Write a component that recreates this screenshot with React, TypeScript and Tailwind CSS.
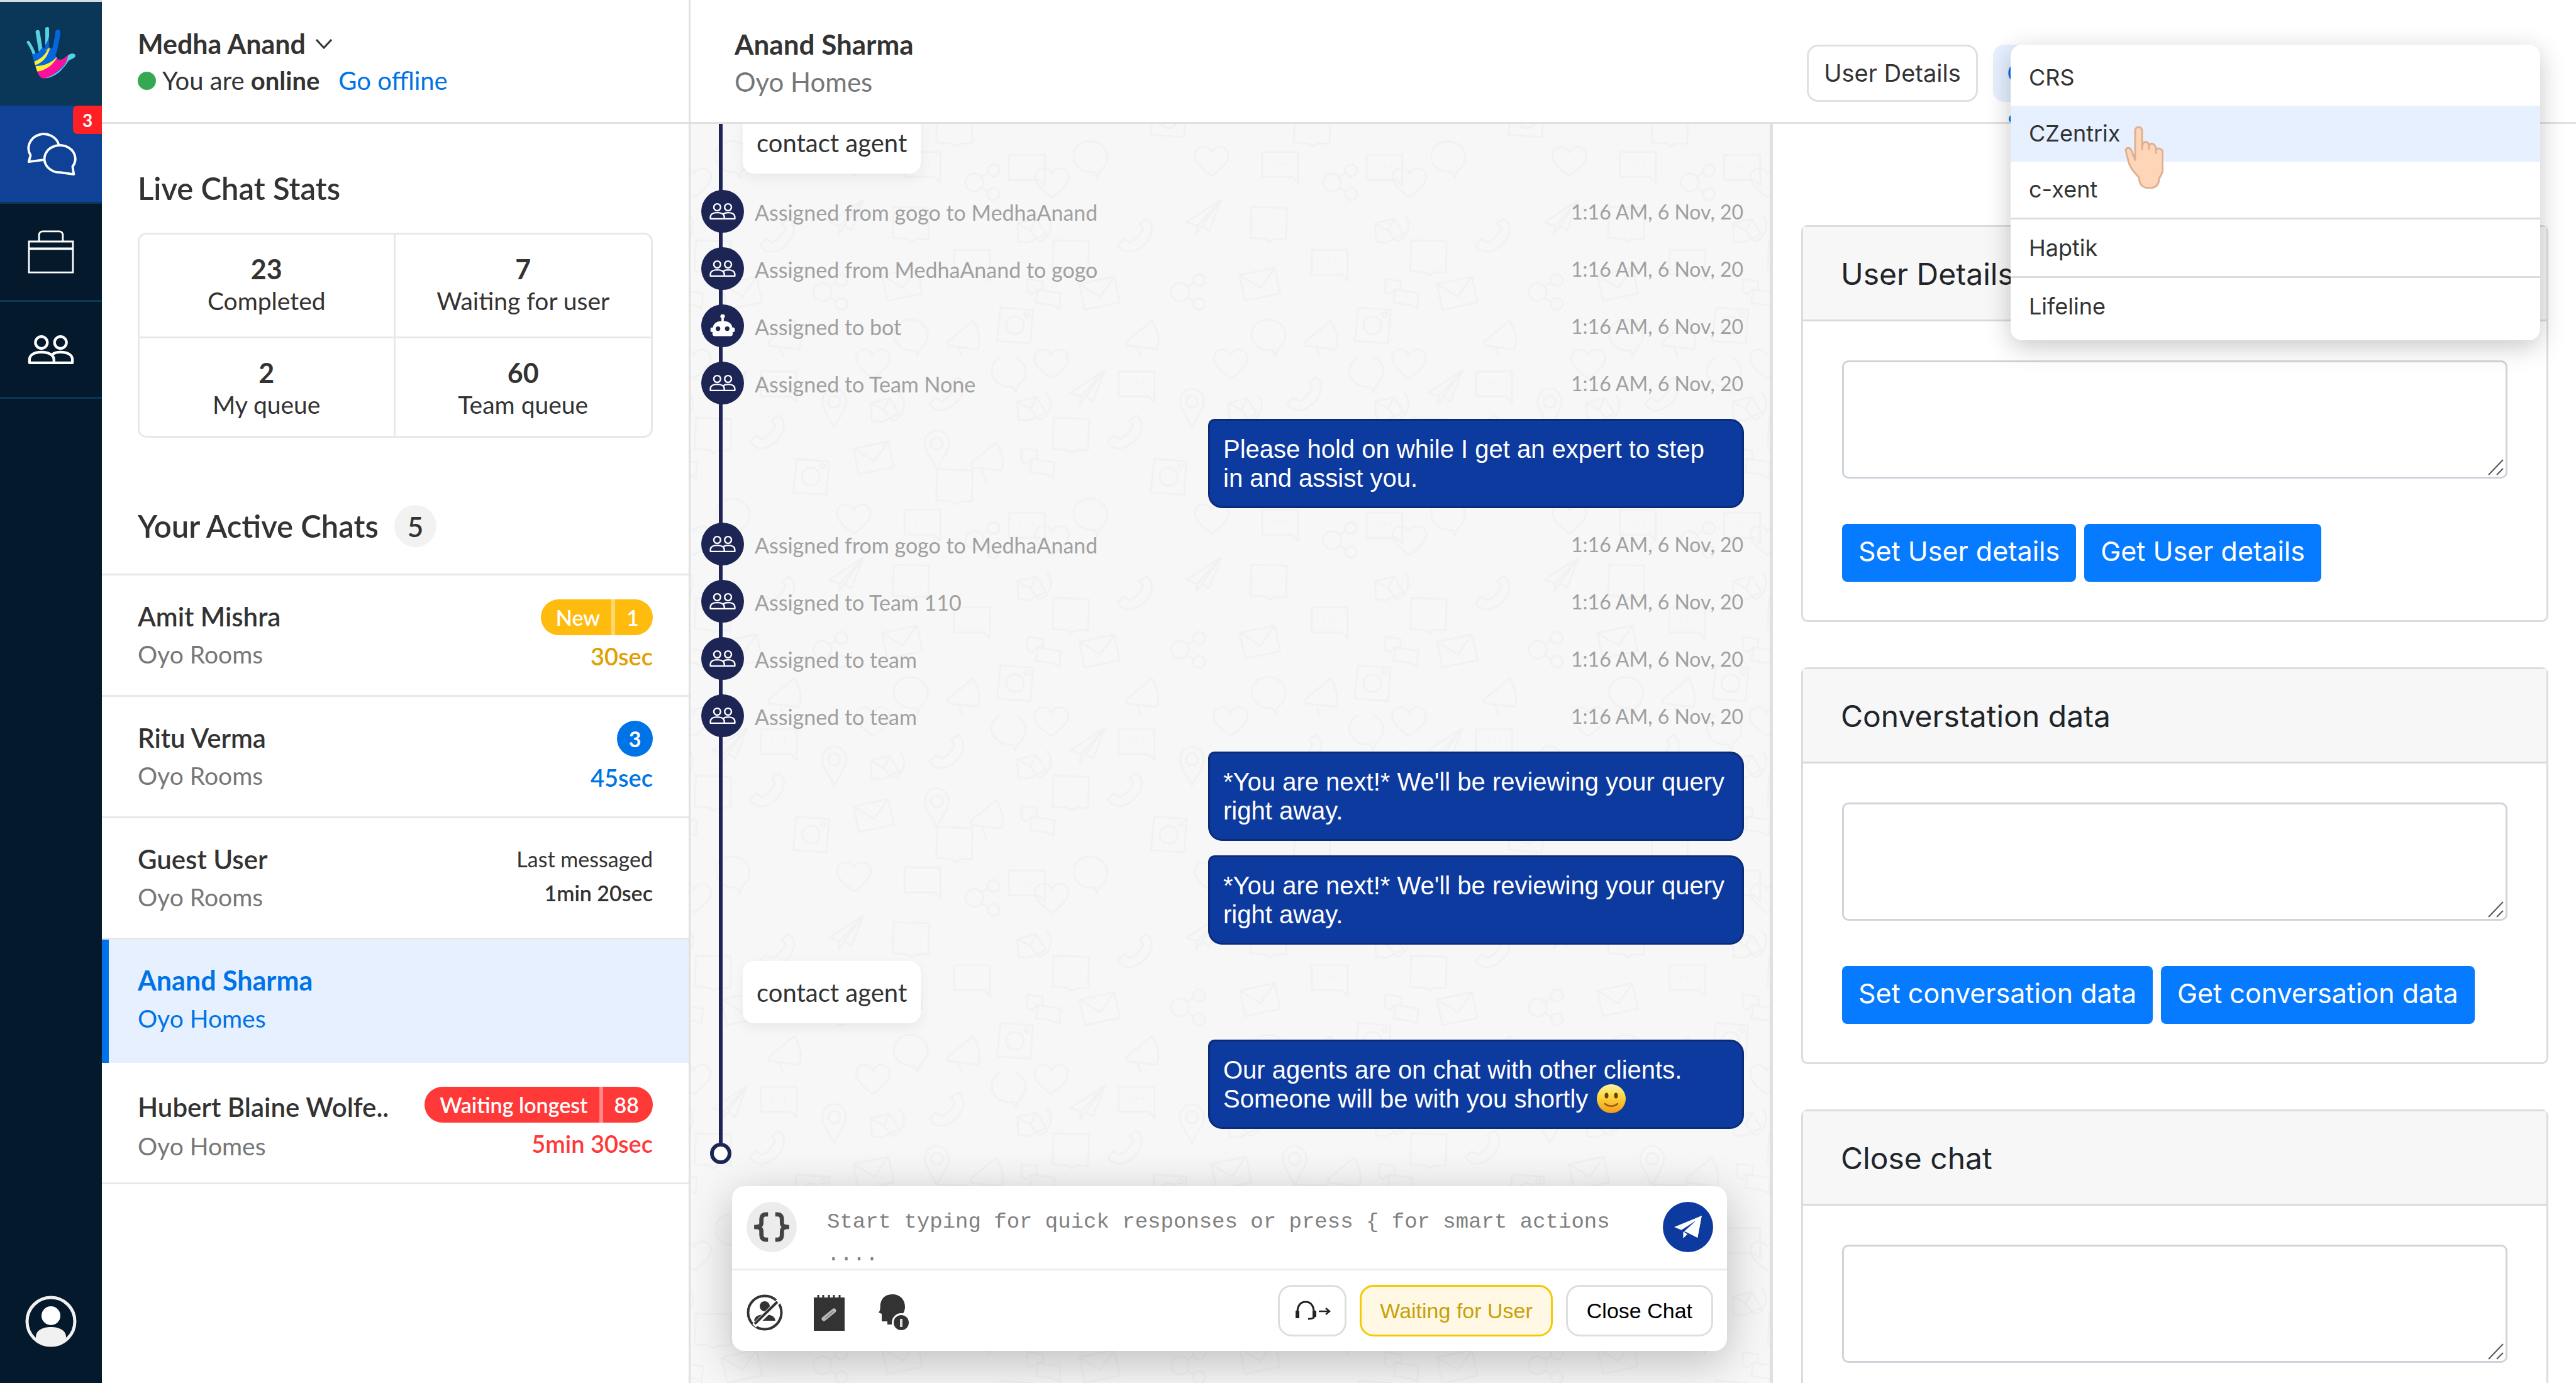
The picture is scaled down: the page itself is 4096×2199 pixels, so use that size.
import React from 'react';

/* ---------- Icons ---------- */

function HandLogo() {
  return (
    <svg viewBox="130 130 255 270" className="h-[85px] w-[81px]" aria-label="Haptik">
      <defs>
        <clipPath id="palm">
          <path d="M160 275C172 272 186 268 192 266C200 255 208 244 216 238L228 248L248 240C256 246 264 244 268 238L282 250C277 268 279 282 284 290C290 303 306 304 320 296C330 288 340 276 358 271C374 269 381 275 379 284C374 295 358 297 345 306C334 324 314 350 290 370C268 386 240 396 220 396C204 394 196 382 188 364C178 338 170 305 160 275Z" />
        </clipPath>
        <clipPath id="middle">
          <path d="M227 146a10 10 0 0 1 20 0V255H227Z" />
        </clipPath>
      </defs>
      <g strokeLinecap="round" fill="none">
        <path d="M141 213C152 228 162 246 172 275" stroke="#57d1e2" strokeWidth="15" />
        <path d="M189 162L204 255" stroke="#57d1e2" strokeWidth="21" />
        <path d="M291 162C288 195 282 220 272 262" stroke="#0567de" strokeWidth="25" />
      </g>
      <g clipPath="url(#middle)">
        <rect x="220" y="130" width="40" height="130" fill="#57d1e2" />
        <path d="M248 170C244 200 236 215 226 228V260H250Z" fill="#0567de" />
      </g>
      <g clipPath="url(#palm)">
        <rect x="150" y="230" width="240" height="170" fill="#0567de" />
        <path d="M170 312C205 298 230 275 249 233L251 245C236 290 214 318 174 329Z" fill="#fff033" />
        <path d="M228 254C238 248 244 242 248 233L251 245L230 256Z" fill="#e8a93f" />
        <path d="M176 334C225 332 262 315 284 287L288 298C262 338 225 358 184 362Z" fill="#fff033" />
        <path d="M184 362C235 355 268 325 285 292L300 306L346 276L338 304C310 350 260 385 225 398L190 400Z" fill="#fb0f9c" />
        <path d="M345 270L390 262V310L342 316C300 375 260 395 225 400L232 392C290 372 330 330 337 302Z" fill="#57d1e2" />
      </g>
    </svg>
  );
}

function ChatsIcon() {
  return (
    <svg viewBox="0 0 86 72" className="h-[68px] w-[81px]" fill="none" stroke="#fff" strokeWidth="4" strokeLinejoin="round" strokeLinecap="round">
      <path d="M28 46L5 49L8 38A26 24 0 1 1 56 21" />
      <path d="M79 57A26 23 0 1 0 58 67L81 70Z" />
    </svg>
  );
}

function BagIcon() {
  return (
    <svg viewBox="0 0 78 73" className="h-[69px] w-[74px]" fill="none" stroke="#fff" strokeWidth="3">
      <path d="M19 20V8a6 6 0 0 1 6-6h28a6 6 0 0 1 6 6V20" />
      <path d="M2 19H76V71H2Z" />
      <path d="M2 31H76" strokeWidth="4" />
    </svg>
  );
}

function PeopleIcon({ className }: { className: string }) {
  return (
    <svg viewBox="0 0 78 50" className={className} fill="none" stroke="#fff" strokeWidth="4.5" strokeLinejoin="round">
      <circle cx="23" cy="13" r="10" />
      <circle cx="55" cy="13" r="10" />
      <path d="M3 47V42C3 33 12 29 23 29S44 33 44 42V47Z" />
      <path d="M41 33C45 30 50 29 55 29C66 29 75 33 75 42V47H44" />
    </svg>
  );
}

function RobotIcon() {
  return (
    <svg viewBox="0 0 24 24" className="h-[44px] w-[44px]" fill="#fff">
      <path
        fillRule="evenodd"
        d="M12 2a1.8 1.8 0 0 1 1 3.400V8h1.500A6.500 6.500 0 0 1 20.500 13.500H21.500A1 1 0 0 1 22.500 14.500V16.500A1 1 0 0 1 21.500 17.500H20.800V19A2 2 0 0 1 18.800 21H5.200A2 2 0 0 1 3.200 19V17.500H2.500A1 1 0 0 1 1.500 16.500V14.500A1 1 0 0 1 2.500 13.500H3.500A6.500 6.500 0 0 1 9.500 8H11V5.400A1.800 1.800 0 0 1 12 2ZM8 12.500a2 2 0 1 0 0 4a2 2 0 0 0 0-4ZM16 12.500a2 2 0 1 0 0 4a2 2 0 0 0 0-4Z"
      />
    </svg>
  );
}

function ProfileIcon() {
  return (
    <svg viewBox="0 0 82 82" className="h-[82px] w-[82px]">
      <defs>
        <clipPath id="profile-ring">
          <circle cx="41" cy="41" r="38" />
        </clipPath>
      </defs>
      <circle cx="41" cy="41" r="38" fill="none" stroke="#f1f1f1" strokeWidth="5" />
      <circle cx="41" cy="32" r="15" fill="#fff" />
      <path clipPath="url(#profile-ring)" d="M17 82V66C17 55 28 50 41 50S65 55 65 66V82Z" fill="#f1f1f1" />
    </svg>
  );
}

function BracesIcon() {
  return (
    <svg viewBox="0 0 62 50" className="h-[48px] w-[60px]" fill="none" stroke="#444" strokeWidth="7">
      <path d="M25 4H22C16 4 14 7 14 13V18C14 23 11 25 2 25C11 25 14 27 14 32V37C14 43 16 46 22 46H25" />
      <path d="M37 4H40C46 4 48 7 48 13V18C48 23 51 25 60 25C51 25 48 27 48 32V37C48 43 46 46 40 46H37" />
    </svg>
  );
}

function SendIcon() {
  return (
    <svg viewBox="0 0 48 40" className="h-[38px] w-[46px]" fill="#fff">
      <path d="M47 1L1 20L13 25L38 9L17 28L16 29V39L23 32L17 28L20 28L40 38Z" />
      <path d="M38 9L20 27L40 38L47 1Z" />
    </svg>
  );
}

function BlockUserIcon() {
  return (
    <svg viewBox="0 0 58 58" className="h-[58px] w-[58px]">
      <circle cx="29" cy="29" r="26.500" fill="none" stroke="#333" strokeWidth="4" />
      <circle cx="29" cy="19" r="8" fill="#333" />
      <path d="M12 42C13 34 21 32 29 32S45 34 46 42Z" fill="#333" />
      <path d="M12 50L52 10" stroke="#fff" strokeWidth="8" />
      <path d="M13 47L49 12" stroke="#333" strokeWidth="4" />
    </svg>
  );
}

function NotepadIcon() {
  return (
    <svg viewBox="0 0 49 57" className="h-[57px] w-[49px]">
      <path d="M0 4H49V57H0Z" fill="#333" />
      <path d="M7 0V6M15 0V6M24 0V6M32 0V6M41 0V6" stroke="#333" strokeWidth="3" />
      <path d="M16 38L32 25" stroke="#b9b9b9" strokeWidth="7" strokeLinecap="round" />
      <path d="M18 37L31 26" stroke="#8c8c8c" strokeWidth="2" />
    </svg>
  );
}

function HeadInfoIcon() {
  return (
    <svg viewBox="0 0 49 58" className="h-[58px] w-[49px]">
      <path d="M22 0C34 0 42 8 42 20C42 28 38 30 37 35L24 48H14V43H5V31L0 29C4 24 2 20 3 15C5 5 12 0 22 0Z" fill="#333" />
      <circle cx="36" cy="45" r="15" fill="#fff" />
      <circle cx="36" cy="45" r="12" fill="#333" />
      <path d="M36 39V52" stroke="#ddd" strokeWidth="4" />
    </svg>
  );
}

function HeadsetArrowIcon() {
  return (
    <svg viewBox="0 0 60 32" className="h-[32px] w-[60px]" fill="none" stroke="#222" strokeWidth="3">
      <path d="M6 22C5 8 11 2 19 2S33 8 32 22" />
      <path d="M6 16V28" strokeWidth="6" />
      <path d="M33 16V26" strokeWidth="6" />
      <path d="M33 26C31 29 27 29 23 29" />
      <path d="M40 17H56M51 12L57 17L51 22" strokeWidth="2.500" />
    </svg>
  );
}

function SmileEmoji() {
  return (
    <svg viewBox="0 0 48 48" className="inline-block h-[48px] w-[48px] align-middle" role="img" aria-label="slightly smiling face">
      <defs>
        <linearGradient id="face" x1="0" y1="0" x2="0" y2="1">
          <stop offset="0" stopColor="#fdf7a0" />
          <stop offset="0.450" stopColor="#fdd43a" />
          <stop offset="1" stopColor="#f29a17" />
        </linearGradient>
      </defs>
      <circle cx="24" cy="24" r="23" fill="url(#face)" />
      <ellipse cx="16.500" cy="19" rx="3" ry="4.500" fill="#6b3b0a" />
      <ellipse cx="31.500" cy="19" rx="3" ry="4.500" fill="#6b3b0a" />
      <path d="M14 32C19 37 29 37 34 32" fill="none" stroke="#9a5a10" strokeWidth="2.500" strokeLinecap="round" />
    </svg>
  );
}

function PointingHand() {
  return (
    <svg viewBox="0 0 62 100" className="h-[100px] w-[62px]" fill="#ffd5b8" stroke="#dfb090" strokeWidth="3" strokeLinejoin="round" strokeLinecap="round">
      <path d="M17 54V8C17 0 28 0 28 8V37C28 22 38 23 39 32C40 26 50 27 50 38C54 34 61 37 61 42V68C61 76 57 80 55 84C55 94 50 99 39 99C28 99 24 93 23 82C14 72 8 66 6 55L2 39C3 34 9 34 11 39Z" />
      <path d="M28 37V36M39 32V37M50 38V43M17 54L15 47" />
    </svg>
  );
}

/* ---------- Wallpaper of the conversation ---------- */

type Spot = [string, number, number, number?];

const wallpaper: Spot[] = [
  ['heart', 564, 306], ['heart', 232, 270], ['heart', 264, 10], ['heart', 563, 10], ['heart', 264, 610], ['heart', 563, 610],
  ['chat', 347, 275], ['chat', 522, 280], ['chat', 430, 439], ['chat', 106, 43],
  ['share', 448, 306], ['share', 193, 490],
  ['balloon', 28, 265], ['balloon', 327, 564], ['balloon', 491, 25],
  ['plane', 218, 365], ['plane', 23, 51, 0], ['plane', 623, 51, 0],
  ['note', 327, 375], ['note', 595, 431], ['note', -5, 431], ['note', 595, 129], ['note', -5, 129], ['note', 400, 215],
  ['callmail', 534, 383], ['callmail', 288, 84], ['callmail', 534, 82],
  ['phone', 103, 395], ['phone', 387, 61], ['phone', 86, 125],
  ['mail', 313, 477, -12], ['mail', 44, 492, -12], ['mail', 265, 168, -12],
  ['bubbles', 551, 492], ['bubbles', 541, 176],
  ['camera', 502, 546], ['camera', 160, 200],
  ['horn', 416, 566], ['horn', 116, 566], ['horn', 455, 170],
  ['pin', 199, 84], ['pin', 371, 154],
];

function Doodle({ kind }: { kind: string }) {
  switch (kind) {
    case 'heart':
      return <path d="M0 25C-22 10 -30 -2 -28 -12C-25 -26 -6 -28 0 -14C6 -28 25 -26 28 -12C30 -2 22 10 0 25Z" />;
    case 'chat':
      return (
        <>
          <path d="M-30 -20H30V32L20 22H-30Z" />
          <path d="M-11 0H-9M-1 0H1M9 0H11" strokeWidth="4" />
        </>
      );
    case 'share':
      return (
        <>
          <circle cx="-14" cy="0" r="15" />
          <circle cx="18" cy="-20" r="10" />
          <circle cx="18" cy="20" r="10" />
          <path d="M-2 -9L9 -16M-2 9L9 16" />
        </>
      );
    case 'balloon':
      return <path d="M8 24C-18 26 -29 8 -28 -4C-27 -20 -14 -28 0 -28C18 -28 30 -14 29 0C28 10 22 18 16 22L12 34Z" />;
    case 'plane':
      return <path d="M30 -30L-28 8L-10 14L30 -30L-12 28L-10 14M30 -30L10 22L-2 14" />;
    case 'note':
      return <path d="M-28 -28L31 -26L30 26L10 26L2 31L-5 26L-30 24Z" />;
    case 'callmail':
      return <path d="M-28 -8L4 -16L20 10L-10 24L-26 22ZM-28 -8L-6 4L4 -16M-6 4L8 22M20 -22C34 -16 30 18 8 22" />;
    case 'phone':
      return <path d="M20 -28C36 -16 28 8 10 20C-6 32 -22 28 -28 16L-18 6L-8 12C2 8 12 -4 14 -12L8 -20Z" />;
    case 'mail':
      return <path d="M-30 -22H30V22H-30ZM-30 -22L0 6L30 -22" />;
    case 'bubbles':
      return <path d="M-28 -24L-2 -20V-6H-12L-20 2L-28 -2ZM-10 -6L28 0L26 18V26L14 20L-14 16Z" />;
    case 'camera':
      return (
        <>
          <path d="M-24 -30L30 -26L26 30L-30 26Z" />
          <circle cx="0" cy="0" r="15" />
          <circle cx="20" cy="-18" r="4" />
        </>
      );
    case 'horn':
      return <path d="M-28 8L16 -28C26 -10 30 4 24 20L-26 14ZM-8 18L0 40" />;
    default:
      return (
        <>
          <path d="M0 34C-12 10 -20 2 -20 -10A20 22 0 0 1 20 -10C20 2 12 10 0 34Z" />
          <circle cx="0" cy="-10" r="10" />
        </>
      );
  }
}

function Wallpaper() {
  return (
    <svg className="pointer-events-none absolute inset-0 h-full w-full" aria-hidden="true">
      <defs>
        <pattern id="doodles" width="600" height="600" patternUnits="userSpaceOnUse" patternTransform="scale(0.948) translate(-558 -208)">
          <g fill="none" stroke="#f1f1f1" strokeWidth="3" strokeLinejoin="round">
            {wallpaper.map(([kind, x, y, turn], i) => (
              <g key={i} transform={`translate(${x} ${y}) rotate(${turn ?? 0})`}>
                <Doodle kind={kind} />
              </g>
            ))}
          </g>
        </pattern>
      </defs>
      <rect width="100%" height="100%" fill="url(#doodles)" />
    </svg>
  );
}

/* ---------- Navigation rail ---------- */

function Rail() {
  return (
    <nav className="flex flex-col items-stretch border-t-[3px] border-[#d8dade] bg-[#04192c]">
      <a href="#home" className="flex h-[165px] items-start bg-[#0a3658] pt-[38px] pl-[41px]">
        <HandLogo />
      </a>
      <a href="#chats" aria-label="Chats" className="relative flex h-[156px] items-center justify-center border-b-[3px] border-[#0a3658] bg-[#0f4296]">
        <ChatsIcon />
        <span className="absolute top-0 right-0 flex h-[45px] w-[46px] items-center justify-center rounded-l-[7px] bg-[#ff2026] text-[28px] leading-none font-bold text-white">3</span>
      </a>
      <a href="#work" aria-label="Work" className="flex h-[156px] items-center justify-center border-b-[3px] border-[#0a3658]">
        <BagIcon />
      </a>
      <a href="#team" aria-label="Team" className="flex h-[154px] items-center justify-center border-b-[3px] border-[#0a3658]">
        <PeopleIcon className="h-[48px] w-[74px]" />
      </a>
      <button aria-label="Profile" className="mt-auto mb-[57px] flex justify-center">
        <ProfileIcon />
      </button>
    </nav>
  );
}

/* ---------- Agent panel ---------- */

const stats = [
  ['23', 'Completed'],
  ['7', 'Waiting for user'],
  ['2', 'My queue'],
  ['60', 'Team queue'],
];

function Pill({ label, count, tone }: { label: string; count: string; tone: string }) {
  return (
    <span className={`flex h-[57px] items-center overflow-hidden rounded-full text-[34px] font-semibold text-white ${tone}`}>
      <span className="pr-[18px] pl-[24px]">{label}</span>
      <span className="flex h-full items-center border-l-[6px] border-white/40 pr-[22px] pl-[18px]">{count}</span>
    </span>
  );
}

function ChatRow({ name, team, active, low, children }: { name: string; team: string; active?: boolean; low?: boolean; children?: React.ReactNode }) {
  return (
    <li>
      <button
        className={
          active
            ? 'flex h-[196px] w-full justify-between border-l-[11px] border-[#0073e6] bg-[#e6f0ff] pr-[57px] pl-[46px] text-left'
            : 'flex h-[193px] w-full justify-between border-b-[3px] border-[#e8e8e8] pr-[57px] pl-[57px] text-left'
        }
      >
        <span className={low ? 'flex flex-col pt-[39px] leading-[62px]' : 'flex flex-col pt-[35px] leading-[60px]'}>
          <span className={active ? 'text-[43px] font-bold text-[#0073e6]' : 'text-[42px] font-semibold text-[#333]'}>{name}</span>
          <span className={active ? 'text-[39px] text-[#0073e6]' : 'text-[39px] text-[#777]'}>{team}</span>
        </span>
        <span className="flex flex-col items-end pt-[38px]">{children}</span>
      </button>
    </li>
  );
}

function AgentPanel() {
  return (
    <aside className="flex flex-col border-r-[3px] border-[#e0e0e0] bg-white text-[#333]">
      <header className="h-[197px] shrink-0 border-b-[3px] border-[#e0e0e0] pt-[41px] pl-[57px] leading-[58px]">
        <button className="flex items-center text-[43px] font-bold">
          Medha Anand
          <svg viewBox="0 0 26 16" className="ml-[16px] h-[16px] w-[26px]" fill="none" stroke="#333" strokeWidth="3">
            <path d="M1 1L13 14L25 1" />
          </svg>
        </button>
        <p className="flex items-center text-[40px]">
          <span className="mr-[10px] h-[29px] w-[29px] rounded-full bg-[#34a853]" />
          <span>
            You are <b>online</b>
          </span>
          <a href="#offline" className="ml-[30px] text-[#0073e6]">
            Go offline
          </a>
        </p>
      </header>

      <section className="px-[57px] pt-[72px]">
        <h2 className="text-[49px] leading-[60px] font-semibold">Live Chat Stats</h2>
        <dl className="mt-[41px] grid grid-cols-2 grid-rows-[165px_155px] overflow-hidden rounded-[14px] border-[3px] border-[#e8e8e8] text-center leading-[50px]">
          {stats.map(([value, label], i) => (
            <div key={label} className={['border-r-[3px] border-b-[3px]', 'border-b-[3px]', 'border-r-[3px]', ''][i] + ' flex flex-col-reverse justify-end border-[#e8e8e8] pt-[30px]'}>
              <dt className="text-[39px]">{label}</dt>
              <dd className="text-[43px] font-bold">{value}</dd>
            </div>
          ))}
        </dl>
      </section>

      <div className="flex h-[219px] items-start border-b-[3px] border-[#e8e8e8] pt-[107px] pl-[57px]">
        <h2 className="text-[49px] leading-[67px] font-semibold">Your Active Chats</h2>
        <span className="ml-[25px] flex h-[67px] w-[67px] items-center justify-center rounded-full bg-[#f2f2f2] text-[44px] font-semibold">5</span>
      </div>

      <ul>
        <ChatRow name="Amit Mishra" team="Oyo Rooms">
          <Pill label="New" count="1" tone="bg-[#ffbc0f]" />
          <span className="text-[38px] leading-[66px] font-semibold text-[#dfa000]">30sec</span>
        </ChatRow>
        <ChatRow name="Ritu Verma" team="Oyo Rooms">
          <span className="flex h-[57px] w-[57px] items-center justify-center rounded-full bg-[#0073e6] text-[34px] font-bold text-white">3</span>
          <span className="text-[38px] leading-[66px] font-semibold text-[#0073e6]">45sec</span>
        </ChatRow>
        <ChatRow name="Guest User" team="Oyo Rooms">
          <span className="text-[34px] leading-[54px]">Last messaged</span>
          <span className="text-[34px] leading-[54px] font-semibold">1min 20sec</span>
        </ChatRow>
        <ChatRow name="Anand Sharma" team="Oyo Homes" active />
        <ChatRow name="Hubert Blaine Wolfe.." team="Oyo Homes" low>
          <Pill label="Waiting longest" count="88" tone="bg-[#ff3838]" />
          <span className="text-[38px] leading-[66px] font-semibold text-[#ff3838]">5min 30sec</span>
        </ChatRow>
      </ul>
    </aside>
  );
}

/* ---------- Conversation ---------- */

function Event({ text, bot }: { text: string; bot?: boolean }) {
  return (
    <li className="flex h-[68px] items-center pl-[17px] text-[34px] text-[#a0a0a0]">
      <span className="mr-[17px] flex h-[68px] w-[68px] items-center justify-center rounded-full bg-[#1d2555]">
        {bot ? <RobotIcon /> : <PeopleIcon className="h-[28px] w-[42px]" />}
      </span>
      <span className="pt-[2px]">{text}</span>
      <time className="mr-[42px] ml-auto pt-[2px] text-[32px]">1:16 AM, 6 Nov, 20</time>
    </li>
  );
}

function Reply({ children }: { children: React.ReactNode }) {
  return (
    <li className="mr-[41px] flex h-[142px] w-[852px] flex-col justify-center self-end rounded-[22px] rounded-tl-[10px] border-[3px] border-[#0a2c78] bg-[#0d3a9f] pl-[21px] font-['Liberation_Sans',sans-serif] text-[40px] leading-[46px] text-white">
      {children}
    </li>
  );
}

function Inquiry({ children }: { children: React.ReactNode }) {
  return (
    <li className="my-[3px] ml-[83px] flex h-[99px] items-center self-start rounded-[18px] bg-white px-[22px] text-[40px] text-[#333] shadow-[0_8px_20px_rgba(0,0,0,0.06)]">
      {children}
    </li>
  );
}

function Composer() {
  return (
    <form className="relative mr-[68px] mb-[51px] ml-[66px] rounded-[20px] bg-white shadow-[0_16px_70px_rgba(0,0,0,0.24)]">
      <div className="flex h-[134px] items-start border-b-[3px] border-[#ececec] pl-[23px]">
        <button type="button" aria-label="Smart actions" className="mt-[25px] flex h-[80px] w-[80px] shrink-0 items-center justify-center rounded-full bg-[#ececec]">
          <BracesIcon />
        </button>
        <textarea
          aria-label="Message"
          className="mt-[31px] ml-[48px] h-[100px] w-[1270px] resize-none overflow-hidden font-['Liberation_Mono',monospace] text-[34px] leading-[52px] placeholder:text-[#808080] focus:outline-none"
          placeholder="Start typing for quick responses or press { for smart actions ...."
        />
        <button type="submit" aria-label="Send" className="mt-[25px] mr-[22px] ml-auto flex h-[80px] w-[80px] shrink-0 items-center justify-center rounded-full bg-[#0d3a9f]">
          <SendIcon />
        </button>
      </div>
      <div className="flex h-[128px] items-center pr-[22px] pl-[23px] font-['Liberation_Sans',sans-serif] text-[34px]">
        <button type="button" aria-label="Block user" className="mr-[49px] pt-[6px]">
          <BlockUserIcon />
        </button>
        <button type="button" aria-label="Notes" className="mr-[54px] pt-[6px]">
          <NotepadIcon />
        </button>
        <button type="button" aria-label="User info" className="pt-[6px]">
          <HeadInfoIcon />
        </button>
        <button type="button" aria-label="Transfer chat" className="ml-auto flex h-[82px] w-[109px] items-center justify-center rounded-[22px] border-[3px] border-[#dedede]">
          <HeadsetArrowIcon />
        </button>
        <button type="button" className="ml-[21px] h-[82px] rounded-[22px] border-[3px] border-[#f5c800] bg-[#fff8e4] px-[29px] text-[#c9a106]">
          Waiting for User
        </button>
        <button type="button" className="ml-[21px] h-[82px] rounded-[22px] border-[3px] border-[#dedede] px-[30px] text-black">
          Close Chat
        </button>
      </div>
    </form>
  );
}

function Conversation() {
  return (
    <main className="relative flex min-h-0 flex-col bg-[#f7f7f7]">
      <Wallpaper />
      <div className="relative min-h-0 flex-1 overflow-hidden">
        <div className="absolute top-0 bottom-[35px] left-[31px] flex w-[34px] flex-col items-center">
          <span className="w-[6px] flex-1 bg-[#1d2555]" />
          <span className="h-[34px] w-[34px] rounded-full border-[6px] border-[#1d2555] bg-white" />
        </div>
        <ul className="relative -mt-[23px] flex flex-col gap-[23px]">
          <Inquiry>contact agent</Inquiry>
          <Event text="Assigned from gogo to MedhaAnand" />
          <Event text="Assigned from MedhaAnand to gogo" />
          <Event text="Assigned to bot" bot />
          <Event text="Assigned to Team None" />
          <Reply>
            <p>
              Please hold on while I get an expert to step
              <br />
              in and assist you.
            </p>
          </Reply>
          <Event text="Assigned from gogo to MedhaAnand" />
          <Event text="Assigned to Team 110" />
          <Event text="Assigned to team" />
          <Event text="Assigned to team" />
          <Reply>
            <p>
              *You are next!* We'll be reviewing your query
              <br />
              right away.
            </p>
          </Reply>
          <Reply>
            <p>
              *You are next!* We'll be reviewing your query
              <br />
              right away.
            </p>
          </Reply>
          <Inquiry>contact agent</Inquiry>
          <Reply>
            <p>Our agents are on chat with other clients.</p>
            <p className="flex h-[46px] items-center gap-[13px]">
              Someone will be with you shortly <SmileEmoji />
            </p>
          </Reply>
        </ul>
      </div>
      <Composer />
    </main>
  );
}

/* ---------- Integration panel ---------- */

function DataCard({ id, title, actions = [] }: { id: string; title: string; actions?: string[] }) {
  return (
    <section className="rounded-[10px] border-[3px] border-[#dcdcdc] bg-white">
      <h2 id={id} className="flex h-[150px] items-center border-b-[3px] border-[#dadada] bg-[#f7f7f7] px-[60px] pt-[2px] text-[48px] text-[#212529]">
        {title}
      </h2>
      <div className="px-[62px] pt-[62px] pb-[61px]">
        <div className="relative h-[188px]">
          <textarea aria-labelledby={id} className="block h-full w-full resize-none rounded-[10px] border-[3px] border-[#ced4da] bg-white" />
          <svg viewBox="0 0 25 26" className="pointer-events-none absolute right-[6px] bottom-[5px] h-[26px] w-[25px]" stroke="#555" strokeWidth="2">
            <path d="M1 25L24 1M14 25L24 15" />
          </svg>
        </div>
        <div className="mt-[72px] flex gap-[13px]">
          {actions.map((a) => (
            <button key={a} className="h-[92px] rounded-[8px] bg-[#067bff] px-[26px] pb-[6px] text-[43px] whitespace-nowrap text-white">
              {a}
            </button>
          ))}
        </div>
      </div>
    </section>
  );
}

function IntegrationPanel() {
  return (
    <aside className="flex min-h-0 flex-col gap-[72px] overflow-hidden border-l-[5px] border-[#e0e0e0] bg-white pt-[161px] pr-[44px] pl-[45px] font-['Inter',sans-serif]">
      <DataCard id="user-details" title="User Details" actions={['Set User details', 'Get User details']} />
      <DataCard id="conversation-data" title="Converstation data" actions={['Set conversation data', 'Get conversation data']} />
      <DataCard id="close-chat" title="Close chat" />
    </aside>
  );
}

const menu = ['CRS', 'CZentrix', 'c-xent', 'Haptik', 'Lifeline'];

function CrmMenu() {
  return (
    <div role="menu" className="absolute top-[71px] right-[57px] z-20 w-[842px] rounded-[18px] bg-white pt-[8px] pb-[9px] text-[36px] text-[#333] shadow-[0_10px_40px_rgba(0,0,0,0.22)]">
      {menu.map((m, i) => (
        <button
          key={m}
          role="menuitem"
          className={
            (m === 'CZentrix' ? 'bg-[#e6f0ff]' : '') +
            (i >= 3 ? ' border-t-[3px] border-[#dcdcdc] h-[93px]' : ' h-[89px] pb-[2px]') +
            ' block w-full pl-[29px] text-left'
          }
        >
          {m}
        </button>
      ))}
      <span className="pointer-events-none absolute top-[129px] left-[181px]">
        <PointingHand />
      </span>
    </div>
  );
}

function ChatHeader() {
  return (
    <header className="relative flex h-[197px] items-start border-b-[3px] border-[#e0e0e0] bg-white">
      <div className="pt-[40px] pl-[70px] leading-[60px]">
        <h1 className="text-[44px] font-bold text-[#333]">Anand Sharma</h1>
        <p className="text-[42px] text-[#777]">Oyo Homes</p>
      </div>
      <div className="mt-[71px] mr-[649px] ml-auto flex gap-[24px] font-['Inter',sans-serif]">
        <button className="h-[91px] w-[272px] rounded-[18px] border-[3px] border-[#e0e0e0] text-[38px] whitespace-nowrap text-[#333]">User Details</button>
        <button className="relative h-[91px] w-[278px] rounded-[18px] bg-[#e6f0ff] pl-[22px] text-left text-[38px] text-[#0073e6]">
          C
          <span className="absolute top-[111px] left-[25px] h-[14px] w-[14px] rounded-full bg-[#0073e6]" />
        </button>
      </div>
      <div className="font-['Inter',sans-serif]">
        <CrmMenu />
      </div>
    </header>
  );
}

export default function App() {
  return (
    <div className="grid h-screen grid-cols-[162px_936px_minmax(0,1fr)] overflow-hidden bg-white font-['Lato',sans-serif]">
      <Rail />
      <AgentPanel />
      <div className="grid min-h-0 grid-rows-[197px_minmax(0,1fr)]">
        <ChatHeader />
        <div className="grid min-h-0 grid-cols-[minmax(0,1fr)_1282px]">
          <Conversation />
          <IntegrationPanel />
        </div>
      </div>
    </div>
  );
}
